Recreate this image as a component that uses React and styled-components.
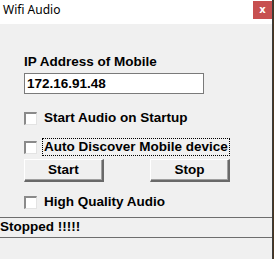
import styled, { createGlobalStyle } from "styled-components";

const GlobalStyle = createGlobalStyle`
  html, body {
    margin: 0;
    padding: 0;
    background: #4a3620;
  }
  #root {
    width: 274px;
    height: 259px;
  }
`;

const Window = styled.div`
  width: 273px;
  height: 259px;
  background: #f0f0f0;
  border-right: 1px solid #3c3c3c;
  box-sizing: border-box;
  display: flex;
  flex-direction: column;
  font-family: "Liberation Sans", Arial, sans-serif;
`;

const TitleBar = styled.div`
  height: 24px;
  background: #ffffff;
  display: flex;
  align-items: flex-start;
  justify-content: space-between;

  .title {
    font-family: "Noto Sans", "Open Sans", sans-serif;
    font-size: 12px;
    line-height: 20px;
    padding-left: 3px;
    color: #000;
  }
`;

const CloseButton = styled.div`
  width: 19px;
  height: 18px;
  margin-top: 1px;
  margin-right: 0px;
  background: #c75050;
  color: #fff;
  font-family: "DejaVu Sans", sans-serif;
  font-weight: bold;
  font-size: 10px;
  line-height: 17px;
  text-align: center;
`;

const Body = styled.div`
  padding: 30px 0 0 24px;
  display: flex;
  flex-direction: column;
  align-items: flex-start;
  font-weight: bold;
  font-size: 13.5px;
  color: #000;
`;

const Label = styled.div`
  line-height: 16px;
`;

const TextBox = styled.div`
  margin-top: 3px;
  width: 180px;
  height: 21px;
  box-sizing: border-box;
  border: 1px solid #7a7a7a;
  background: #fff;
  padding-left: 2px;
  line-height: 19px;
`;

const CheckRow = styled.div`
  display: flex;
  align-items: center;
  height: 18px;
  margin-top: ${(p) => p.$gap}px;
`;

const Box = styled.span`
  width: 13px;
  height: 13px;
  box-sizing: border-box;
  background: #fff;
  border-top: 2px solid #8a8a8a;
  border-left: 2px solid #8a8a8a;
  border-right: 1px solid #e3e3e3;
  border-bottom: 1px solid #e3e3e3;
  margin-right: 5px;
`;

const CheckText = styled.span`
  line-height: 16px;
  padding: 0 1px;
  border: 1px ${(p) => (p.$focus ? "dotted #000" : "solid transparent")};
`;

const ButtonRow = styled.div`
  display: flex;
  gap: 46px;
  margin-top: 3px;
`;

const Button = styled.div`
  width: 80px;
  height: 23px;
  box-sizing: border-box;
  background: #f0f0f0;
  border-top: 1px solid #ffffff;
  border-left: 1px solid #ffffff;
  border-right: 2px solid #696969;
  border-bottom: 2px solid #696969;
  box-shadow: inset -1px -1px 0 #a0a0a0;
  text-align: center;
  line-height: 20px;
`;

const StatusBar = styled.div`
  margin-top: 6px;
  height: 19px;
  border-top: 1px solid #6d6d6d;
  border-bottom: 1px solid #6d6d6d;
  font-weight: bold;
  font-size: 13.5px;
  line-height: 18px;
  padding-left: 0;
`;

const rows = [
  { text: "Start Audio on Startup", gap: 15 },
  { text: "Auto Discover Mobile device", gap: 11, focus: true },
];

export default function App() {
  return (
    <>
      <GlobalStyle />
      <Window>
        <TitleBar>
          <span className="title">Wifi Audio</span>
          <CloseButton>x</CloseButton>
        </TitleBar>
        <Body>
          <Label>IP Address of Mobile</Label>
          <TextBox>172.16.91.48</TextBox>
          {rows.map((r) => (
            <CheckRow key={r.text} $gap={r.gap}>
              <Box />
              <CheckText $focus={r.focus}>{r.text}</CheckText>
            </CheckRow>
          ))}
          <ButtonRow>
            <Button>Start</Button>
            <Button>Stop</Button>
          </ButtonRow>
          <CheckRow $gap={11}>
            <Box />
            <CheckText>High Quality Audio</CheckText>
          </CheckRow>
        </Body>
        <StatusBar>Stopped !!!!!</StatusBar>
      </Window>
    </>
  );
}
